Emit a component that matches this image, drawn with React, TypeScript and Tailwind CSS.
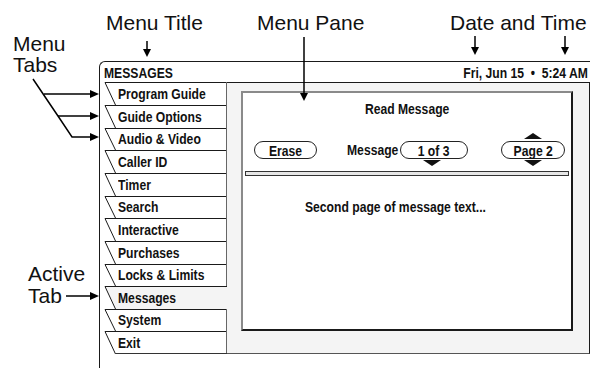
import React from "react";

type Tab = { label: string; h: string; active?: boolean; last?: boolean; px: number };

const tabs: Tab[] = [
  { label: "Program Guide", h: "h-[23px]", px: 23 },
  { label: "Guide Options", h: "h-[23px]", px: 23 },
  { label: "Audio & Video", h: "h-[22px]", px: 22 },
  { label: "Caller ID", h: "h-[23px]", px: 23 },
  { label: "Timer", h: "h-[23px]", px: 23 },
  { label: "Search", h: "h-[22px]", px: 22 },
  { label: "Interactive", h: "h-[23px]", px: 23 },
  { label: "Purchases", h: "h-[23px]", px: 23 },
  { label: "Locks & Limits", h: "h-[22px]", px: 22 },
  { label: "Messages", h: "h-[23px]", px: 23, active: true },
  { label: "System", h: "h-[22px]", px: 22 },
  { label: "Exit", h: "h-[23px]", px: 23, last: true },
];

function N({ children, o = "origin-left" }: { children: React.ReactNode; o?: string }) {
  return (
    <span className={`inline-block whitespace-nowrap font-bold text-[15px] leading-none scale-x-[0.81] ${o}`}>{children}</span>
  );
}

function TabItem({ t }: { t: Tab }) {
  const h = t.px;
  return (
    <div className={`relative ${t.h} flex items-center pl-[18px]`}>
      <svg className="absolute inset-0 overflow-visible" width={127} height={h}>
        <polygon points={`5,0 127,0 127,${h} 15.5,${h}`} fill={t.active ? "#f4f4f4" : "#ffffff"} />
        <line x1={5} y1={0.5} x2={127} y2={0.5} stroke="#1a1a1a" strokeWidth={1} />
        <line x1={5} y1={0.5} x2={15.5} y2={h} stroke="#1a1a1a" strokeWidth={1} />
        {!t.active && <line x1={126.5} y1={0} x2={126.5} y2={h} stroke="#666" strokeWidth={1} />}
        {t.last && <line x1={15.5} y1={h - 0.5} x2={127} y2={h - 0.5} stroke="#333" strokeWidth={1} />}
      </svg>
      <span className="relative">
        <N>{t.label}</N>
      </span>
    </div>
  );
}

function Pill({ children, w }: { children: React.ReactNode; w: string }) {
  return (
    <div className={`${w} h-[18px] rounded-full border border-[#222] bg-white flex items-center justify-center`}>
      <N o="origin-center">{children}</N>
    </div>
  );
}

function Tri({ up }: { up?: boolean }) {
  return (
    <svg width={18} height={6} className="block">
      <polygon points={up ? "9,0 18,6 0,6" : "0,0 18,0 9,6"} fill="#111" />
    </svg>
  );
}

export default function App() {
  return (
    <div className="relative w-[590px] h-[368px] bg-white overflow-hidden text-[#111] font-['Liberation_Sans',Arial,sans-serif]">
      {/* annotation labels */}
      <div className="absolute left-[106px] top-[12px] text-[21px] leading-[21px]">Menu Title</div>
      <div className="absolute left-[257px] top-[12px] text-[21px] leading-[21px]">Menu Pane</div>
      <div className="absolute left-[450px] top-[12px] text-[21px] leading-[21px] whitespace-nowrap">Date and Time</div>
      <div className="absolute left-[13px] top-[33px] text-[21px] leading-[21px]">
        Menu
        <br />
        Tabs
      </div>
      <div className="absolute left-[28px] top-[263px] text-[21px] leading-[22px]">
        Active
        <br />
        Tab
      </div>

      {/* main frame */}
      <div className="pl-[99px] pt-[61px]">
        <div className="h-[307px] border-l border-t border-[#1a1a1a] rounded-tl-[6px] flex flex-col">
          <div className="h-[20px] flex items-center justify-between pl-[4px] pr-[2px]">
            <N>MESSAGES</N>
            <N o="origin-right">Fri, Jun 15 &nbsp;•&nbsp; 5:24 AM</N>
          </div>
          <div className="flex">
            <div className="w-[127px] flex flex-col">
              {tabs.map((t) => (
                <TabItem key={t.label} t={t} />
              ))}
            </div>
            <div className="w-[363px] h-[272px] bg-[#f4f4f4] border-t border-r border-b border-t-[#1a1a1a] border-r-[#1a1a1a] border-b-[#555]">
              <div className="ml-[14px] mt-[8px] w-[332px] h-[240px] bg-white border-2 border-l-[#8a8a8a] border-t-[#8a8a8a] border-r-[#1a1a1a] border-b-[#1a1a1a] flex flex-col">
                <div className="pt-[6px] h-[24px] flex items-center justify-center">
                  <N o="origin-center">Read Message</N>
                </div>
                <div className="relative mt-[24px] flex items-center pl-[11px] h-[18px]">
                  <Pill w="w-[63px]">Erase</Pill>
                  <div className="ml-[30px] w-[51px]">
                    <N>Message</N>
                  </div>
                  <div className="relative ml-[2px]">
                    <Pill w="w-[68px]">1 of 3</Pill>
                    <div className="absolute left-[23px] top-[19px]">
                      <Tri />
                    </div>
                  </div>
                  <div className="relative ml-[33px]">
                    <Pill w="w-[64px]">Page 2</Pill>
                    <div className="absolute left-[23px] -top-[8px]">
                      <Tri up />
                    </div>
                    <div className="absolute left-[23px] top-[19px]">
                      <Tri />
                    </div>
                  </div>
                </div>
                <div className="mt-[12px] ml-[2px] w-[324px] h-[5px] border border-[#333] bg-[#e6e6e6]" />
                <div className="mt-[21px] pl-[62px] h-[18px] flex items-center">
                  <N>Second page of message text...</N>
                </div>
              </div>
            </div>
          </div>
        </div>
      </div>

      {/* annotation arrows */}
      <svg className="absolute inset-0 pointer-events-none" width={590} height={368}>
        <g stroke="#000" strokeWidth={1.5} fill="none">
          <line x1={147} y1={41} x2={147} y2={50} />
          <line x1={304} y1={37} x2={304} y2={94} />
          <line x1={475} y1={36} x2={475} y2={48} />
          <line x1={565} y1={36} x2={565} y2={48} />
          <polyline points="33,79 60,119 72,137 91,137" />
          <line x1={44} y1={94} x2={91} y2={94} />
          <line x1={58} y1={116} x2={91} y2={116} />
          <line x1={66} y1={296} x2={91} y2={296} />
        </g>
        <g fill="#000">
          <polygon points="143,49 151,49 147,57" />
          <polygon points="300,93 308,93 304,101" />
          <polygon points="471,47 479,47 475,55" />
          <polygon points="561,47 569,47 565,55" />
          <polygon points="90,133 90,141 99,137" />
          <polygon points="90,90 90,98 99,94" />
          <polygon points="90,112 90,120 99,116" />
          <polygon points="90,292 90,300 99,296" />
        </g>
      </svg>
    </div>
  );
}
